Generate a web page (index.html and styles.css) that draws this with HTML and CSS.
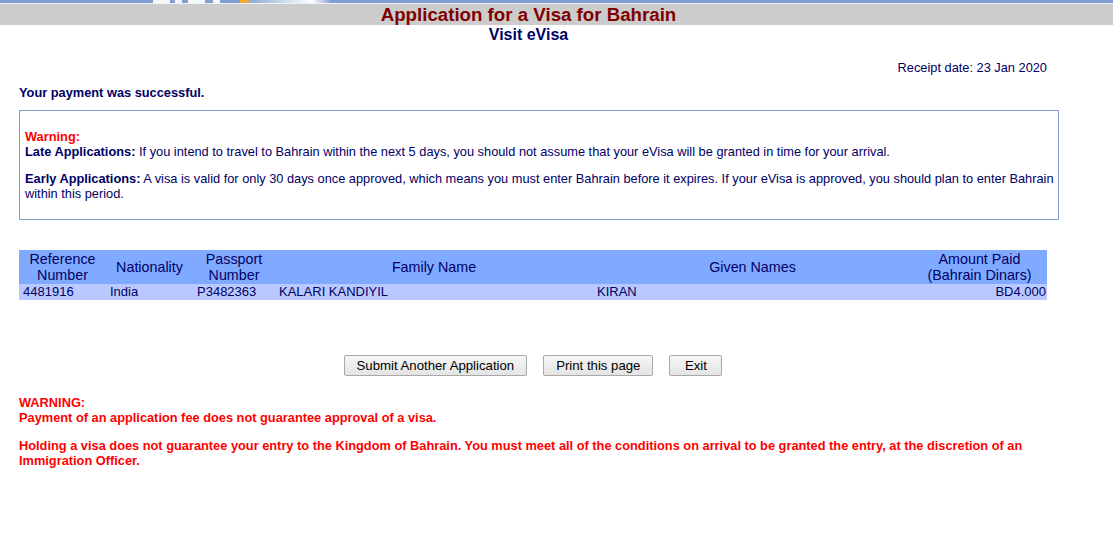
FILE: index.html
```html
<!DOCTYPE html>
<html lang="en">
<head>
<meta charset="utf-8">
<title>Application for a Visa for Bahrain</title>
<link rel="stylesheet" href="styles.css">
</head>
<body>
<div class="topstrip"></div>
<div class="titlebar"><div class="title">Application for a Visa for Bahrain</div></div>
<div class="subtitle">Visit eVisa</div>
<div class="main">
  <div class="receipt">Receipt date: 23 Jan 2020</div>
  <div class="paid">Your payment was successful.</div>
  <div class="notice">
    <div class="warn">Warning:</div>
    <p class="para"><b>Late Applications:</b> If you intend to travel to Bahrain within the next 5 days, you should not assume that your eVisa will be granted in time for your arrival.</p>
    <p class="para gap"><b>Early Applications:</b> A visa is valid for only 30 days once approved, which means you must enter Bahrain before it expires. If your eVisa is approved, you should plan to enter Bahrain within this period.</p>
  </div>
  <table class="results">
    <colgroup>
      <col class="c-ref"><col class="c-nat"><col class="c-pass"><col class="c-fam"><col class="c-giv"><col class="c-amt">
    </colgroup>
    <thead>
      <tr>
        <th>Reference<br>Number</th>
        <th>Nationality</th>
        <th>Passport<br>Number</th>
        <th>Family Name</th>
        <th>Given Names</th>
        <th>Amount Paid<br>(Bahrain Dinars)</th>
      </tr>
    </thead>
    <tbody>
      <tr>
        <td>4481916</td>
        <td>India</td>
        <td>P3482363</td>
        <td>KALARI KANDIYIL</td>
        <td>KIRAN</td>
        <td class="amt">BD4.000</td>
      </tr>
    </tbody>
  </table>
  <div class="actions">
    <button class="btn" type="button">Submit Another Application</button>
    <button class="btn" type="button">Print this page</button>
    <button class="btn btn-exit" type="button">Exit</button>
  </div>
  <div class="final">
    <div>WARNING:</div>
    <div>Payment of an application fee does not guarantee approval of a visa.</div>
    <div class="gap">Holding a visa does not guarantee your entry to the Kingdom of Bahrain. You must meet all of the conditions on arrival to be granted the entry, at the discretion of an Immigration Officer.</div>
  </div>
</div>
</body>
</html>
```
FILE: styles.css
```css
html, body {
  margin: 0;
  padding: 0;
  background: #ffffff;
}
body {
  font-family: "Liberation Sans", Arial, sans-serif;
  font-size: 12.8px;
  line-height: 15px;
  color: #000066;
}
.topstrip {
  height: 3px;
  border-bottom: 1px solid #eef2fa;
  background:
    linear-gradient(to right,
      #7f9fd1 0, #7f9fd1 153px,
      #f4f6fb 153px, #f4f6fb 170px,
      #7f9fd1 170px, #7f9fd1 175px,
      #f4f6fb 175px, #f4f6fb 182px,
      #7f9fd1 182px, #7f9fd1 188px,
      #f4f6fb 188px, #f4f6fb 205px,
      #7f9fd1 205px, #7f9fd1 213px,
      #f4f6fb 213px, #f4f6fb 220px,
      #7f9fd1 220px, #7f9fd1 240px,
      #f0a830 240px, #f0a830 248px,
      #8fabd8 250px, #ffffff 312px, #7f9fd1 332px, #7f9fd1 100%);
}
.titlebar {
  background: #cccccc;
  height: 21px;
}
.title {
  width: 1057px;
  text-align: center;
  font-size: 18.7px;
  line-height: 21px;
  font-weight: bold;
  color: #800000;
}
.subtitle {
  width: 1057px;
  margin-top: 1px;
  text-align: center;
  font-size: 16px;
  line-height: 18px;
  font-weight: bold;
  color: #000066;
}
.main {
  padding-left: 19px;
  width: 1028px;
}
.receipt {
  margin-top: 16px;
  text-align: right;
}
.paid {
  margin-top: 10px;
  font-weight: bold;
}
.notice {
  margin-top: 10px;
  width: 1040px;
  box-sizing: border-box;
  border: 1px solid #7f9fd1;
  padding: 18px 1px 18px 5px;
}
.warn {
  color: #ff0000;
  font-weight: bold;
}
.para {
  margin: 0;
}
.gap {
  margin-top: 12px;
}
.results {
  margin-top: 30px;
  width: 1028px;
  table-layout: fixed;
  border-collapse: collapse;
  border-spacing: 0;
}
.c-ref { width: 87px; }
.c-nat { width: 87px; }
.c-pass { width: 82px; }
.c-fam { width: 318px; }
.c-giv { width: 319px; }
.c-amt { width: 135px; }
.results th {
  background: #80aaff;
  font-weight: normal;
  font-size: 14.3px;
  line-height: 16px;
  height: 34px;
  padding: 0;
  text-align: center;
  vertical-align: middle;
  color: #000066;
}
.results td {
  background: #b9c9ff;
  height: 16px;
  line-height: 16px;
  font-size: 13px;
  padding: 0 0 0 4px;
  color: #000066;
  white-space: nowrap;
}
.results td.amt {
  text-align: right;
  padding: 0 1px 0 0;
}
.actions {
  margin-top: 55px;
  display: flex;
  justify-content: center;
  gap: 16px;
}
.btn {
  font-family: "Liberation Sans", Arial, sans-serif;
  font-size: 13.2px;
  line-height: 15px;
  height: 21px;
  padding: 0 12px;
  color: #000000;
  background: linear-gradient(#f6f6f6, #e4e4e4);
  border: 1px solid #a9a9a9;
  border-radius: 2px;
}
.btn-exit {
  min-width: 53px;
}
.final {
  margin-top: 19px;
  color: #ff0000;
  font-weight: bold;
}
.final .gap {
  margin-top: 13px;
}
```
